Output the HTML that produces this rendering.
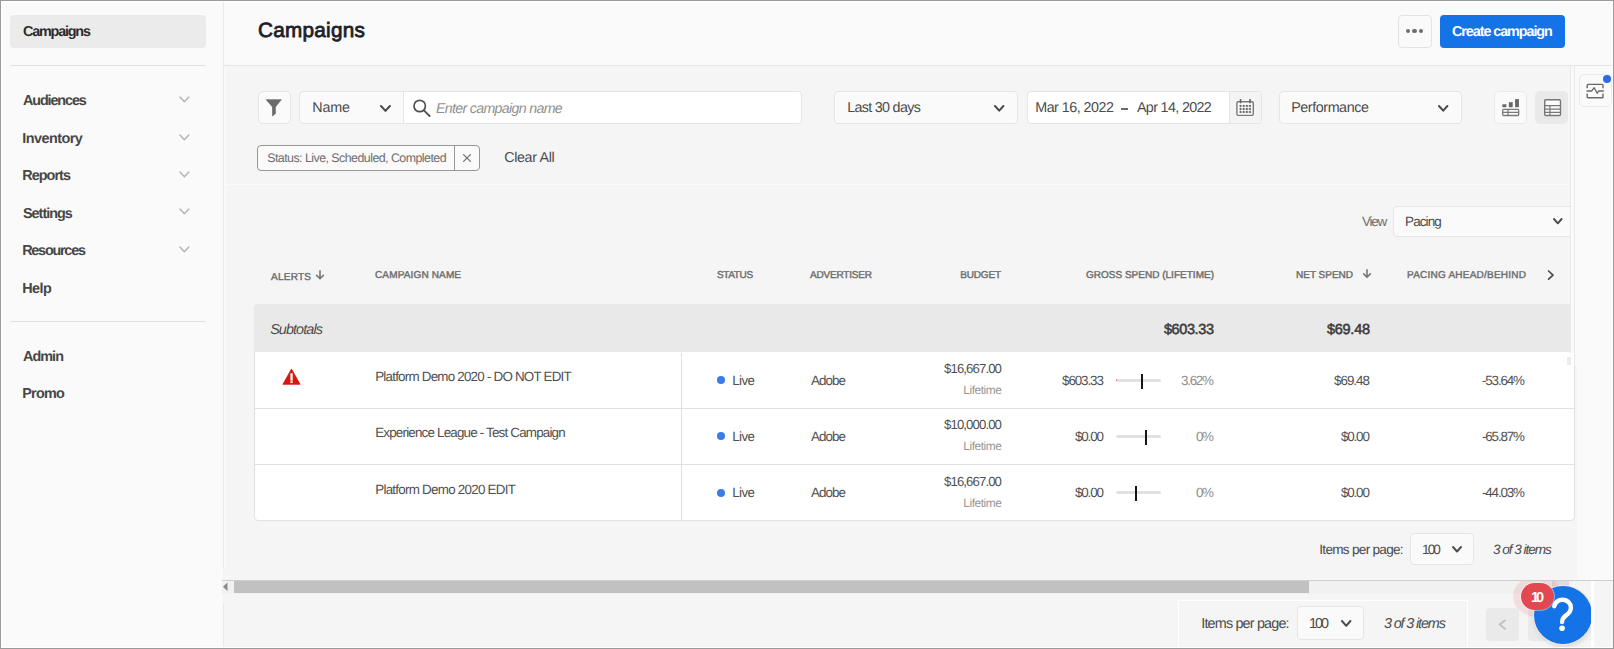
<!DOCTYPE html>
<html><head><meta charset="utf-8"><title>Campaigns</title>
<style>
html,body{margin:0;padding:0;}
body{width:1614px;height:649px;overflow:hidden;position:relative;background:#f5f5f5;font-family:"Liberation Sans",sans-serif;}
.r{position:absolute;box-sizing:border-box;display:block;}
.t{position:absolute;white-space:nowrap;font-family:"Liberation Sans",sans-serif;text-rendering:geometricPrecision;}
</style></head><body>
<div class="r" style="left:0px;top:0px;width:1614px;height:649px;background:#f5f5f5;"></div>
<div class="r" style="left:1px;top:1px;width:222px;height:647px;background:#fafafa;"></div>
<div class="r" style="left:223px;top:1px;width:1px;height:568px;background:#eaeaea;"></div>
<div class="r" style="left:223px;top:603px;width:1px;height:45px;background:#eaeaea;"></div>
<div class="r" style="left:224px;top:66px;width:2px;height:503px;background:#f9f9f9;"></div>
<div class="r" style="left:224px;top:1px;width:1389px;height:64px;background:#fafafa;"></div>
<div class="r" style="left:224px;top:65px;width:1389px;height:1px;background:#e4e4e4;"></div>
<div class="r" style="left:224px;top:184px;width:1346px;height:1px;background:#fafafa;"></div>
<div class="r" style="left:10px;top:15px;width:196px;height:33px;background:#ebebeb;border-radius:4px;"></div>
<div class="t" id="t0" style="left:23.00px;top:24.20px;font-size:14.4px;line-height:16px;color:#2c2c2c;letter-spacing:-1.202px;font-weight:bold;">Campaigns</div>
<div class="r" style="left:10px;top:65px;width:196px;height:1px;background:#e1e1e1;"></div>
<div class="t" id="t1" style="left:23.00px;top:92.90px;font-size:14.4px;line-height:16px;color:#464646;letter-spacing:-1.123px;font-weight:bold;">Audiences</div>
<svg class="r" style="left:177.7px;top:95.05px;" width="12.8" height="8.7" viewBox="0 0 12.8 8.7"><path d="M2 2 L6.4 6.7 L10.8 2" fill="none" stroke="#b4b4b4" stroke-width="1.5" stroke-linecap="round" stroke-linejoin="round"/></svg>
<div class="t" id="t2" style="left:22.20px;top:130.60px;font-size:14.4px;line-height:16px;color:#464646;letter-spacing:-0.522px;font-weight:bold;">Inventory</div>
<svg class="r" style="left:177.7px;top:132.55px;" width="12.8" height="8.7" viewBox="0 0 12.8 8.7"><path d="M2 2 L6.4 6.7 L10.8 2" fill="none" stroke="#b4b4b4" stroke-width="1.5" stroke-linecap="round" stroke-linejoin="round"/></svg>
<div class="t" id="t3" style="left:22.20px;top:168.40px;font-size:14.4px;line-height:16px;color:#464646;letter-spacing:-0.935px;font-weight:bold;">Reports</div>
<svg class="r" style="left:177.7px;top:169.95px;" width="12.8" height="8.7" viewBox="0 0 12.8 8.7"><path d="M2 2 L6.4 6.7 L10.8 2" fill="none" stroke="#b4b4b4" stroke-width="1.5" stroke-linecap="round" stroke-linejoin="round"/></svg>
<div class="t" id="t4" style="left:23.00px;top:206.10px;font-size:14.4px;line-height:16px;color:#464646;letter-spacing:-0.989px;font-weight:bold;">Settings</div>
<svg class="r" style="left:177.7px;top:207.45px;" width="12.8" height="8.7" viewBox="0 0 12.8 8.7"><path d="M2 2 L6.4 6.7 L10.8 2" fill="none" stroke="#b4b4b4" stroke-width="1.5" stroke-linecap="round" stroke-linejoin="round"/></svg>
<div class="t" id="t5" style="left:22.20px;top:242.90px;font-size:14.4px;line-height:16px;color:#464646;letter-spacing:-1.235px;font-weight:bold;">Resources</div>
<svg class="r" style="left:177.7px;top:245.05px;" width="12.8" height="8.7" viewBox="0 0 12.8 8.7"><path d="M2 2 L6.4 6.7 L10.8 2" fill="none" stroke="#b4b4b4" stroke-width="1.5" stroke-linecap="round" stroke-linejoin="round"/></svg>
<div class="t" id="t6" style="left:22.20px;top:281.00px;font-size:14.4px;line-height:16px;color:#464646;letter-spacing:-0.488px;font-weight:bold;">Help</div>
<div class="r" style="left:10px;top:321px;width:196px;height:1px;background:#e1e1e1;"></div>
<div class="t" id="t7" style="left:23.00px;top:349.00px;font-size:14.4px;line-height:16px;color:#464646;letter-spacing:-0.959px;font-weight:bold;">Admin</div>
<div class="t" id="t8" style="left:22.20px;top:386.20px;font-size:14.4px;line-height:16px;color:#464646;letter-spacing:-0.731px;font-weight:bold;">Promo</div>
<div class="t" id="t9" style="left:258.06px;top:19.30px;font-size:20.7px;line-height:23px;color:#1e1e2a;letter-spacing:0.267px;-webkit-text-stroke:0.8px #1e1e2a;">Campaigns</div>
<div class="r" style="left:1398px;top:15px;width:34px;height:33px;background:#fafafa;border:1px solid #e3e3e3;border-radius:4px;"></div>
<div class="r" style="left:1405.7px;top:28.8px;width:4.4px;height:4.4px;background:#6e6e6e;border-radius:50%;"></div>
<div class="r" style="left:1412.3999999999999px;top:28.8px;width:4.4px;height:4.4px;background:#6e6e6e;border-radius:50%;"></div>
<div class="r" style="left:1419.0px;top:28.8px;width:4.4px;height:4.4px;background:#6e6e6e;border-radius:50%;"></div>
<div class="r" style="left:1440px;top:15px;width:125px;height:33px;background:#1473e6;border-radius:4px;"></div>
<div class="t" id="t10" style="left:1452.04px;top:23.50px;font-size:14.4px;line-height:16px;color:#ffffff;letter-spacing:-1.085px;font-weight:bold;">Create campaign</div>
<div class="r" style="left:258px;top:91px;width:33px;height:33px;background:#fafafa;border:1px solid #e5e5e5;border-radius:5px;"></div>
<svg class="r" style="left:264px;top:97px;" width="20" height="22" viewBox="0 0 20 22"><path d="M2.2 2.7 H17.3 L11.4 9.9 V16.6 L8.5 18.9 V9.9 Z" fill="#6a6a6a" stroke="#6a6a6a" stroke-width="0.7" stroke-linejoin="round"/></svg>
<div class="r" style="left:299px;top:91px;width:105px;height:33px;background:#fafafa;border:1px solid #e5e5e5;border-radius:4px 0 0 4px;"></div>
<div class="t" id="t11" style="left:312.32px;top:100.20px;font-size:14.3px;line-height:16px;color:#4b4b4b;letter-spacing:-0.202px;">Name</div>
<svg class="r" style="left:379.05px;top:103.55px;" width="12.9" height="8.9" viewBox="0 0 12.9 8.9"><path d="M2 2 L6.45 6.9 L10.9 2" fill="none" stroke="#4b4b4b" stroke-width="2.0" stroke-linecap="round" stroke-linejoin="round"/></svg>
<div class="r" style="left:403px;top:91px;width:399px;height:33px;background:#ffffff;border:1px solid #e5e5e5;border-radius:0 4px 4px 0;"></div>
<svg class="r" style="left:410px;top:97px;" width="24" height="24" viewBox="0 0 24 24"><circle cx="9.7" cy="9" r="5.7" fill="none" stroke="#505050" stroke-width="1.7"/><path d="M13.9 13.3 L19.6 19" stroke="#505050" stroke-width="1.8" stroke-linecap="round"/></svg>
<div class="t" id="t12" style="left:435.98px;top:101.00px;font-size:14.2px;line-height:16px;color:#909090;letter-spacing:-0.669px;font-style:italic;">Enter campaign name</div>
<div class="r" style="left:834px;top:91px;width:184px;height:33px;background:#fafafa;border:1px solid #e5e5e5;border-radius:4px;"></div>
<div class="t" id="t13" style="left:847.14px;top:100.20px;font-size:14.3px;line-height:16px;color:#4b4b4b;letter-spacing:-0.673px;">Last 30 days</div>
<svg class="r" style="left:992.9px;top:103.55000000000001px;" width="12.4" height="8.7" viewBox="0 0 12.4 8.7"><path d="M2 2 L6.2 6.7 L10.4 2" fill="none" stroke="#4b4b4b" stroke-width="2.0" stroke-linecap="round" stroke-linejoin="round"/></svg>
<div class="r" style="left:1027px;top:91px;width:235px;height:33px;background:#ffffff;border:1px solid #e5e5e5;border-radius:4px;"></div>
<div class="r" style="left:1229px;top:92px;width:32px;height:31px;background:#f4f4f4;border-radius:0 3px 3px 0;border-left:1px solid #e3e3e3;"></div>
<svg class="r" style="left:1236px;top:99px;" width="19" height="18" viewBox="0 0 19 18"><rect x="0.9" y="2.8" width="16.4" height="13.6" rx="1.4" fill="#fdfdfd" stroke="#787878" stroke-width="1.4"/><path d="M4.6 0.6 V3.6 M14.0 0.6 V3.6" stroke="#6a6a6a" stroke-width="1.7" stroke-linecap="round"/><path d="M3.2 6.9 H15.2" stroke="#b9b9b9" stroke-width="1.1"/><path d="M3.2 10.0 H15.2" stroke="#b9b9b9" stroke-width="1.1"/><path d="M3.2 13.0 H15.2" stroke="#b9b9b9" stroke-width="1.1"/><path d="M4.5 5.6 V14.2" stroke="#c4c4c4" stroke-width="1.0"/><path d="M7.7 5.6 V14.2" stroke="#c4c4c4" stroke-width="1.0"/><path d="M10.9 5.6 V14.2" stroke="#c4c4c4" stroke-width="1.0"/><path d="M14.0 5.6 V14.2" stroke="#c4c4c4" stroke-width="1.0"/><rect x="3.65" y="6.050000000000001" width="1.7" height="1.7" fill="#5e5e5e"/><rect x="6.8500000000000005" y="6.050000000000001" width="1.7" height="1.7" fill="#5e5e5e"/><rect x="10.05" y="6.050000000000001" width="1.7" height="1.7" fill="#5e5e5e"/><rect x="13.15" y="6.050000000000001" width="1.7" height="1.7" fill="#5e5e5e"/><rect x="3.65" y="9.15" width="1.7" height="1.7" fill="#5e5e5e"/><rect x="6.8500000000000005" y="9.15" width="1.7" height="1.7" fill="#5e5e5e"/><rect x="10.05" y="9.15" width="1.7" height="1.7" fill="#5e5e5e"/><rect x="13.15" y="9.15" width="1.7" height="1.7" fill="#5e5e5e"/><rect x="3.65" y="12.15" width="1.7" height="1.7" fill="#5e5e5e"/><rect x="6.8500000000000005" y="12.15" width="1.7" height="1.7" fill="#5e5e5e"/><rect x="10.05" y="12.15" width="1.7" height="1.7" fill="#5e5e5e"/><rect x="13.15" y="12.15" width="1.7" height="1.7" fill="#5e5e5e"/></svg>
<div class="t" id="t14" style="left:1035.30px;top:99.80px;font-size:14.3px;line-height:16px;color:#4b4b4b;letter-spacing:-0.517px;">Mar 16, 2022</div>
<div class="r" style="left:1120.8px;top:108.45px;width:6.8px;height:1.35px;background:#6a6a6a;"></div>
<div class="t" id="t15" style="left:1136.96px;top:99.80px;font-size:14.3px;line-height:16px;color:#4b4b4b;letter-spacing:-0.639px;">Apr 14, 2022</div>
<div class="r" style="left:1279px;top:91px;width:183px;height:33px;background:#fafafa;border:1px solid #e5e5e5;border-radius:4px;"></div>
<div class="t" id="t16" style="left:1291.22px;top:100.20px;font-size:14.3px;line-height:16px;color:#4b4b4b;letter-spacing:-0.420px;">Performance</div>
<svg class="r" style="left:1437.3px;top:103.55000000000001px;" width="12.4" height="8.7" viewBox="0 0 12.4 8.7"><path d="M2 2 L6.2 6.7 L10.4 2" fill="none" stroke="#4b4b4b" stroke-width="2.0" stroke-linecap="round" stroke-linejoin="round"/></svg>
<div class="r" style="left:1494px;top:91px;width:33px;height:33px;background:#fafafa;border:1px solid #e9e9e9;border-radius:5px;"></div>
<svg class="r" style="left:1502px;top:99.3px;" width="18" height="18" viewBox="0 0 18 18"><rect x="0.4" y="5.3" width="4" height="2.9" fill="#666"/><rect x="6.9" y="3.2" width="3.8" height="5" fill="#666"/><rect x="13.1" y="0.1" width="3.8" height="8.1" fill="#666"/><rect x="0.7" y="10.3" width="16" height="6.2" rx="0.9" fill="#fdfdfd" stroke="#777" stroke-width="1.3"/><path d="M0.7 13.4 H16.7 M6 10.3 V16.5" stroke="#777" stroke-width="1.2"/></svg>
<div class="r" style="left:1535px;top:91px;width:33px;height:33px;background:#e9e9e9;border-radius:5px;"></div>
<svg class="r" style="left:1543.8px;top:99.1px;" width="18" height="18" viewBox="0 0 18 18"><rect x="0.7" y="0.7" width="15.8" height="15.8" rx="1.2" fill="#fbfbfb" stroke="#777" stroke-width="1.4"/><path d="M0.7 6.7 H16.5 M0.7 10.1 H16.5 M0.7 13.4 H16.5 M5.9 6.7 V16.5" stroke="#777" stroke-width="1.2"/></svg>
<div class="r" style="left:257px;top:145px;width:223px;height:26px;background:#fafafa;border:1px solid #979797;border-radius:4px;"></div>
<div class="r" style="left:454px;top:146px;width:1px;height:24px;background:#979797;"></div>
<div class="t" id="t17" style="left:267.18px;top:150.80px;font-size:12.4px;line-height:14px;color:#6e6e6e;letter-spacing:-0.532px;">Status: Live, Scheduled, Completed</div>
<svg class="r" style="left:462px;top:153px;" width="10" height="10" viewBox="0 0 10 10"><path d="M1.6 1.6 L8.4 8.4 M8.4 1.6 L1.6 8.4" stroke="#6e6e6e" stroke-width="1.25" stroke-linecap="round"/></svg>
<div class="t" id="t18" style="left:504.16px;top:149.50px;font-size:14.3px;line-height:16px;color:#4b4b4b;letter-spacing:-0.329px;">Clear All</div>
<div class="r" style="left:1575px;top:66px;width:38px;height:514px;background:#fafafa;"></div>
<div class="r" style="left:1575px;top:366px;width:2px;height:214px;background:#f5f5f5;"></div>
<div class="r" style="left:1579px;top:74px;width:33px;height:32.5px;background:#fafafa;border:1px solid #ebebeb;border-radius:5px;"></div>
<svg class="r" style="left:1585.9px;top:82.5px;" width="19" height="16" viewBox="0 0 19 16"><path d="M1.2 5.3 V2.3 Q1.2 1.4 2.1 1.4 H16.1 Q17 1.4 17 2.3 V5.3 M17 10.4 V13.9 Q17 14.8 16.1 14.8 H2.1 Q1.2 14.8 1.2 13.9 V10.4" fill="none" stroke="#686868" stroke-width="1.4"/><path d="M0.5 8.0 H5.6 L8.2 4.7 L11.2 10.3 L12.6 8.0 H17.8" fill="none" stroke="#686868" stroke-width="1.3" stroke-linejoin="round"/></svg>
<div class="r" style="left:1602.8px;top:75px;width:8.2px;height:8.2px;background:#2d6ae3;border-radius:50%;"></div>
<div class="t" id="t19" style="left:1362.00px;top:214.00px;font-size:13.5px;line-height:15px;color:#6e6e6e;letter-spacing:-1.279px;">View</div>
<div class="r" style="left:1393px;top:205.5px;width:200px;height:31.5px;background:#fafafa;border:1px solid #e5e5e5;border-radius:4px;clip-path:inset(0 22.5px 0 0);"></div>
<div class="t" id="t20" style="left:1405.08px;top:214.00px;font-size:13.5px;line-height:15px;color:#4b4b4b;letter-spacing:-0.920px;">Pacing</div>
<svg class="r" style="left:1551.9px;top:217.25px;" width="11.6" height="8.3" viewBox="0 0 11.6 8.3"><path d="M2 2 L5.8 6.3 L9.6 2" fill="none" stroke="#4b4b4b" stroke-width="1.9" stroke-linecap="round" stroke-linejoin="round"/></svg>
<div class="t" id="t21" style="left:270.96px;top:271.79px;font-size:10.0px;line-height:11px;color:#6e6e6e;letter-spacing:0.264px;-webkit-text-stroke:0.42px #6e6e6e;">ALERTS</div>
<div class="t" id="t22" style="left:374.98px;top:269.70px;font-size:10.0px;line-height:11px;color:#6e6e6e;letter-spacing:0.149px;-webkit-text-stroke:0.42px #6e6e6e;">CAMPAIGN NAME</div>
<div class="t" id="t23" style="left:716.98px;top:269.70px;font-size:10.0px;line-height:11px;color:#6e6e6e;letter-spacing:-0.369px;-webkit-text-stroke:0.42px #6e6e6e;">STATUS</div>
<div class="t" id="t24" style="left:810.00px;top:269.70px;font-size:10.0px;line-height:11px;color:#6e6e6e;letter-spacing:-0.189px;-webkit-text-stroke:0.42px #6e6e6e;">ADVERTISER</div>
<div class="t" id="t25" style="left:960.14px;top:269.70px;font-size:10.0px;line-height:11px;color:#6e6e6e;letter-spacing:-0.134px;-webkit-text-stroke:0.42px #6e6e6e;">BUDGET</div>
<div class="t" id="t26" style="left:1085.94px;top:269.70px;font-size:10.0px;line-height:11px;color:#6e6e6e;letter-spacing:0.012px;-webkit-text-stroke:0.42px #6e6e6e;">GROSS SPEND (LIFETIME)</div>
<div class="t" id="t27" style="left:1296.10px;top:269.70px;font-size:10.0px;line-height:11px;color:#6e6e6e;letter-spacing:-0.024px;-webkit-text-stroke:0.42px #6e6e6e;">NET SPEND</div>
<div class="t" id="t28" style="left:1406.98px;top:269.70px;font-size:10.0px;line-height:11px;color:#6e6e6e;letter-spacing:0.230px;-webkit-text-stroke:0.42px #6e6e6e;">PACING AHEAD/BEHIND</div>
<svg class="r" style="left:313.8px;top:270.3px;" width="12" height="10.699999999999989" viewBox="0 0 12 10.699999999999989"><path d="M6 0.9 V8.50 M2.7 5.40 L6 8.80 L9.3 5.40" fill="none" stroke="#777" stroke-width="1.6" stroke-linecap="round" stroke-linejoin="round"/></svg>
<svg class="r" style="left:1360.8px;top:269.4px;" width="12" height="10.200000000000045" viewBox="0 0 12 10.200000000000045"><path d="M6 0.9 V8.00 M2.7 4.90 L6 8.30 L9.3 4.90" fill="none" stroke="#777" stroke-width="1.6" stroke-linecap="round" stroke-linejoin="round"/></svg>
<svg class="r" style="left:1545px;top:268px;" width="12" height="14" viewBox="0 0 12 14"><path d="M3.6 3.0 L8.0 7.1 L3.6 11.2" fill="none" stroke="#4b4b4b" stroke-width="1.7" stroke-linecap="round" stroke-linejoin="round"/></svg>
<div class="r" style="left:254px;top:304px;width:1321px;height:217px;background:#ffffff;border:1px solid #e1e1e1;border-radius:4px;"></div>
<div class="r" style="left:254px;top:304px;width:1316px;height:48.2px;background:#e9e9e9;border-radius:4px 0 0 0;"></div>
<div class="r" style="left:1570px;top:300px;width:6px;height:52.5px;background:#f5f5f5;"></div>
<div class="r" style="left:1566.5px;top:357px;width:4px;height:8px;background:#ececec;"></div>
<div class="r" style="left:303px;top:351.6px;width:71px;height:1px;background:#ffffff;"></div>
<div class="r" style="left:255px;top:408px;width:1319px;height:1px;background:#e1e1e1;"></div>
<div class="r" style="left:255px;top:464px;width:1319px;height:1px;background:#e1e1e1;"></div>
<div class="r" style="left:1570px;top:66px;width:1px;height:286.5px;background:#e9e9e9;"></div>
<div class="r" style="left:1571px;top:66px;width:3px;height:286.5px;background:#fafafa;"></div>
<div class="r" style="left:1574px;top:66px;width:1px;height:300px;background:#e9e9e9;"></div>
<div class="r" style="left:1575px;top:66px;width:2px;height:300px;background:#fafafa;"></div>
<div class="r" style="left:681px;top:352.5px;width:1px;height:168px;background:#e1e1e1;"></div>
<div class="t" id="t29" style="left:270.16px;top:322.00px;font-size:14.4px;line-height:16px;color:#4b4b4b;letter-spacing:-0.910px;font-style:italic;">Subtotals</div>
<div class="t" id="t30" style="left:1163.94px;top:321.55px;font-size:14.5px;line-height:16px;color:#3c3c3c;letter-spacing:-0.402px;-webkit-text-stroke:0.55px #3c3c3c;">$603.33</div>
<div class="t" id="t31" style="left:1326.94px;top:321.55px;font-size:14.5px;line-height:16px;color:#3c3c3c;letter-spacing:-0.258px;-webkit-text-stroke:0.55px #3c3c3c;">$69.48</div>
<div class="t" id="t32" style="left:375.22px;top:369.30px;font-size:13.4px;line-height:15px;color:#505050;letter-spacing:-0.782px;">Platform Demo 2020 - DO NOT EDIT</div>
<div class="r" style="left:717px;top:376.2px;width:8px;height:8px;background:#3a7de8;border-radius:50%;"></div>
<div class="t" id="t33" style="left:732.20px;top:373.00px;font-size:13.4px;line-height:15px;color:#505050;letter-spacing:-0.607px;">Live</div>
<div class="t" id="t34" style="left:810.90px;top:373.00px;font-size:13.4px;line-height:15px;color:#505050;letter-spacing:-0.937px;">Adobe</div>
<div class="t" id="t35" style="left:944.06px;top:361.30px;font-size:13.2px;line-height:15px;color:#505050;letter-spacing:-0.905px;">$16,667.00</div>
<div class="t" id="t36" style="left:963.24px;top:383.30px;font-size:11.9px;line-height:14px;color:#959595;letter-spacing:-0.418px;">Lifetime</div>
<div class="t" id="t37" style="left:1062.04px;top:373.00px;font-size:13.4px;line-height:15px;color:#505050;letter-spacing:-1.086px;">$603.33</div>
<div class="r" style="left:1115.8px;top:378.6px;width:45.3px;height:3.6px;background:#e1e1e1;border-radius:2px;"></div>
<div class="r" style="left:1141.2px;top:373.5px;width:2.2px;height:15.3px;background:#151515;"></div>
<div class="t" id="t38" style="left:1181.00px;top:373.00px;font-size:13.4px;line-height:15px;color:#8e8e8e;letter-spacing:-1.259px;">3.62%</div>
<div class="t" id="t39" style="left:1334.10px;top:373.00px;font-size:13.4px;line-height:15px;color:#505050;letter-spacing:-1.037px;">$69.48</div>
<div class="t" id="t40" style="left:1482.00px;top:373.00px;font-size:13.4px;line-height:15px;color:#505050;letter-spacing:-1.158px;">-53.64%</div>
<div class="t" id="t41" style="left:375.22px;top:425.45px;font-size:13.4px;line-height:15px;color:#505050;letter-spacing:-0.809px;">Experience League - Test Campaign</div>
<div class="r" style="left:717px;top:432.34999999999997px;width:8px;height:8px;background:#3a7de8;border-radius:50%;"></div>
<div class="t" id="t42" style="left:732.20px;top:429.15px;font-size:13.4px;line-height:15px;color:#505050;letter-spacing:-0.607px;">Live</div>
<div class="t" id="t43" style="left:810.90px;top:429.15px;font-size:13.4px;line-height:15px;color:#505050;letter-spacing:-0.937px;">Adobe</div>
<div class="t" id="t44" style="left:944.06px;top:417.45px;font-size:13.2px;line-height:15px;color:#505050;letter-spacing:-0.905px;">$10,000.00</div>
<div class="t" id="t45" style="left:963.24px;top:439.45px;font-size:11.9px;line-height:14px;color:#959595;letter-spacing:-0.418px;">Lifetime</div>
<div class="t" id="t46" style="left:1075.02px;top:429.15px;font-size:13.4px;line-height:15px;color:#505050;letter-spacing:-1.148px;">$0.00</div>
<div class="r" style="left:1115.8px;top:434.75px;width:45.3px;height:3.6px;background:#e1e1e1;border-radius:2px;"></div>
<div class="r" style="left:1144.8000000000002px;top:429.65px;width:2.2px;height:15.3px;background:#151515;"></div>
<div class="t" id="t47" style="left:1196.10px;top:429.15px;font-size:13.4px;line-height:15px;color:#8e8e8e;letter-spacing:-1.507px;">0%</div>
<div class="t" id="t48" style="left:1340.96px;top:429.15px;font-size:13.4px;line-height:15px;color:#505050;letter-spacing:-1.148px;">$0.00</div>
<div class="t" id="t49" style="left:1482.00px;top:429.15px;font-size:13.4px;line-height:15px;color:#505050;letter-spacing:-1.158px;">-65.87%</div>
<div class="t" id="t50" style="left:375.22px;top:481.60px;font-size:13.4px;line-height:15px;color:#505050;letter-spacing:-0.744px;">Platform Demo 2020 EDIT</div>
<div class="r" style="left:717px;top:488.5px;width:8px;height:8px;background:#3a7de8;border-radius:50%;"></div>
<div class="t" id="t51" style="left:732.20px;top:485.30px;font-size:13.4px;line-height:15px;color:#505050;letter-spacing:-0.607px;">Live</div>
<div class="t" id="t52" style="left:810.90px;top:485.30px;font-size:13.4px;line-height:15px;color:#505050;letter-spacing:-0.937px;">Adobe</div>
<div class="t" id="t53" style="left:944.06px;top:473.60px;font-size:13.2px;line-height:15px;color:#505050;letter-spacing:-0.905px;">$16,667.00</div>
<div class="t" id="t54" style="left:963.24px;top:495.60px;font-size:11.9px;line-height:14px;color:#959595;letter-spacing:-0.418px;">Lifetime</div>
<div class="t" id="t55" style="left:1075.02px;top:485.30px;font-size:13.4px;line-height:15px;color:#505050;letter-spacing:-1.148px;">$0.00</div>
<div class="r" style="left:1115.8px;top:490.90000000000003px;width:45.3px;height:3.6px;background:#e1e1e1;border-radius:2px;"></div>
<div class="r" style="left:1135.3000000000002px;top:485.8px;width:2.2px;height:15.3px;background:#151515;"></div>
<div class="t" id="t56" style="left:1196.10px;top:485.30px;font-size:13.4px;line-height:15px;color:#8e8e8e;letter-spacing:-1.507px;">0%</div>
<div class="t" id="t57" style="left:1340.96px;top:485.30px;font-size:13.4px;line-height:15px;color:#505050;letter-spacing:-1.148px;">$0.00</div>
<div class="t" id="t58" style="left:1482.00px;top:485.30px;font-size:13.4px;line-height:15px;color:#505050;letter-spacing:-1.158px;">-44.03%</div>
<div class="r" style="left:1115.6px;top:379.4px;width:1.7px;height:2px;background:#e8767b;border-radius:1px;"></div>
<svg class="r" style="left:282px;top:368px;" width="20" height="18" viewBox="0 0 20 18"><path d="M9.5 1.0 L18.1 16.3 H0.9 Z" fill="#d5190e" stroke="#d5190e" stroke-width="0.8" stroke-linejoin="round"/><rect x="8.4" y="5.2" width="2.3" height="7.5" rx="0.4" fill="#fff"/><rect x="8.4" y="13.2" width="2.3" height="1.8" rx="0.3" fill="#fff"/></svg>
<div class="t" id="t59" style="left:1319.30px;top:541.80px;font-size:13.6px;line-height:15px;color:#4b4b4b;letter-spacing:-0.723px;">Items per page:</div>
<div class="r" style="left:1410px;top:533px;width:64px;height:31.5px;background:#fafafa;border:1px solid #e5e5e5;border-radius:4px;"></div>
<div class="t" id="t60" style="left:1422.06px;top:541.80px;font-size:13.6px;line-height:15px;color:#4b4b4b;letter-spacing:-1.956px;">100</div>
<svg class="r" style="left:1451.3px;top:544.75px;" width="12.0" height="8.5" viewBox="0 0 12.0 8.5"><path d="M2 2 L6.0 6.5 L10.0 2" fill="none" stroke="#4b4b4b" stroke-width="1.9" stroke-linecap="round" stroke-linejoin="round"/></svg>
<div class="t" id="t61" style="left:1493.02px;top:541.80px;font-size:13.6px;line-height:15px;color:#4b4b4b;letter-spacing:-1.036px;font-style:italic;">3 of 3 items</div>
<div class="r" style="left:222px;top:580px;width:1391px;height:1px;background:#cfcfcf;"></div>
<div class="r" style="left:222px;top:581px;width:1348.5px;height:13px;background:#f1f1f1;"></div>
<div class="r" style="left:234px;top:580.6px;width:1075px;height:12.2px;background:#c1c1c1;"></div>
<svg class="r" style="left:220px;top:581px;" width="12" height="12" viewBox="0 0 12 12"><path d="M7.5 1.5 L2.9 5.8 L7.5 10.1 Z" fill="#8a8a8a"/></svg>
<div class="r" style="left:1551.5px;top:581px;width:17.5px;height:13px;background:#dedcdc;"></div>
<div class="r" style="left:1591px;top:581px;width:3px;height:67px;background:#ffffff;"></div>
<div class="r" style="left:1178px;top:600px;width:290px;height:48px;border:1px solid #ffffff;border-bottom:none;"></div>
<div class="t" id="t62" style="left:1201.28px;top:615.50px;font-size:14.4px;line-height:16px;color:#4b4b4b;letter-spacing:-0.833px;">Items per page:</div>
<div class="r" style="left:1297px;top:606px;width:66.5px;height:33.5px;background:#fafafa;border:1px solid #e5e5e5;border-radius:4px;"></div>
<div class="t" id="t63" style="left:1309.12px;top:615.50px;font-size:14.4px;line-height:16px;color:#4b4b4b;letter-spacing:-2.113px;">100</div>
<svg class="r" style="left:1340.3px;top:618.7px;" width="12.4" height="8.8" viewBox="0 0 12.4 8.8"><path d="M2 2 L6.2 6.8 L10.4 2" fill="none" stroke="#4b4b4b" stroke-width="2.0" stroke-linecap="round" stroke-linejoin="round"/></svg>
<div class="t" id="t64" style="left:1384.00px;top:616.20px;font-size:14.4px;line-height:16px;color:#4b4b4b;letter-spacing:-1.138px;font-style:italic;">3 of 3 items</div>
<div class="r" style="left:1485.5px;top:608px;width:33px;height:33px;background:#eaeaea;border-radius:4px;"></div>
<svg class="r" style="left:1496px;top:617px;" width="12" height="15" viewBox="0 0 12 15"><path d="M8.9 3.4 L3.7 7.6 L8.9 11.8" fill="none" stroke="#c2c2c2" stroke-width="1.9" stroke-linecap="round" stroke-linejoin="round"/></svg>
<div class="r" style="left:1527.5px;top:608px;width:33px;height:33px;background:#eaeaea;border-radius:4px;"></div>
<div class="r" style="left:1500px;top:581px;width:91px;height:67px;overflow:hidden;"><div class="r" style="left:12.9px;top:-5.3px;width:49.2px;height:41.2px;border-radius:50%;background:rgba(227,72,80,0.13);"></div></div>
<div class="r" style="left:1530px;top:582px;width:61px;height:66px;overflow:hidden;"><div class="r" style="left:4.1px;top:3.8px;width:57.9px;height:57.9px;border-radius:50%;background:#1473e6;box-shadow:0 0 0 1px #f3e7d8, 1px 3px 5px rgba(0,0,0,0.12);"></div></div>
<svg class="r" style="left:1548px;top:594px;" width="30" height="40" viewBox="0 0 30 40"><path d="M6.2 12.2 C7.5 8 10.5 5.8 14.5 5.8 C19.5 5.8 22.9 9.4 22.9 13.8 C22.9 17.6 20.5 19.6 18 21.4 C15.5 23.2 14.2 24.6 14.1 28" fill="none" stroke="#fff" stroke-width="4.4" stroke-linecap="round" stroke-linejoin="round"/><circle cx="14.05" cy="34.2" r="2.8" fill="#fff"/></svg>
<div class="r" style="left:1521.1px;top:582.5px;width:32.8px;height:27.5px;background:#e34850;border-radius:14px;box-shadow:0 0 0 0.8px rgba(255,255,255,0.55);"></div>
<div class="t" id="t65" style="left:1531.00px;top:589.80px;font-size:14.5px;line-height:16px;color:#ffffff;letter-spacing:-3.149px;font-weight:bold;">10</div>
<div class="r" style="left:1px;top:1px;width:1612px;height:647px;border:1px solid #ffffff;border-right:none;"></div>
<div class="r" style="left:1612px;top:1px;width:1px;height:579px;background:#ffffff;"></div>
<div class="r" style="left:0px;top:0px;width:1614px;height:649px;border:1px solid #9a9a9a;"></div>
</body></html>
